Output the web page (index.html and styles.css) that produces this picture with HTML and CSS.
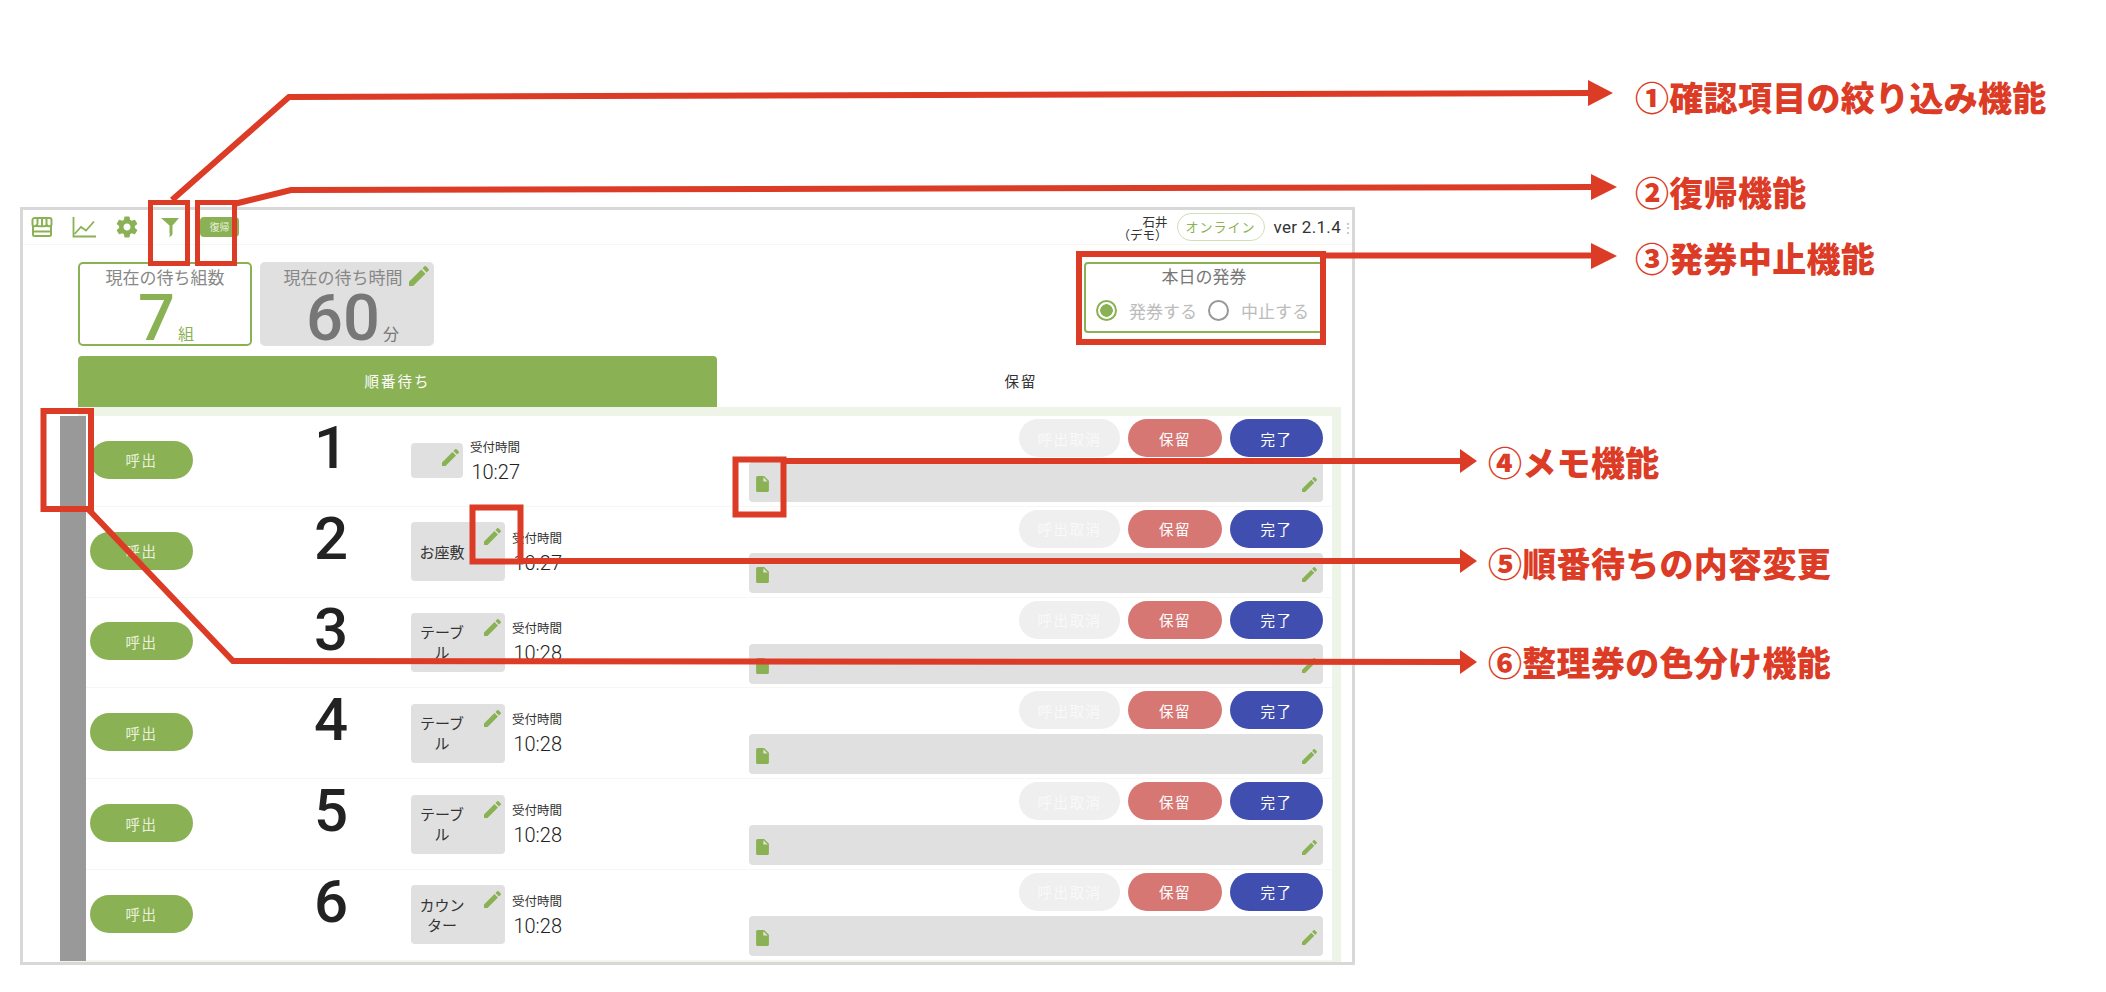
FILE: index.html
```html
<!DOCTYPE html>
<html lang="ja">
<head>
    <title>順番待ち 機能説明</title>
    <link rel="stylesheet" href="styles.css">
</head>
<body>
    <svg class="icon-defs" width="0" height="0">
        <symbol id="i-pencil" viewBox="3 3 18 18"><path d="M3 17.25V21h3.75L17.81 9.94l-3.75-3.75L3 17.25zM20.71 7.04c.39-.39.39-1.02 0-1.41l-2.34-2.34c-.39-.39-1.02-.39-1.41 0l-1.83 1.83 3.75 3.75 1.83-1.83z"/></symbol>
        <symbol id="i-doc" viewBox="4 2 16 20"><path fill-rule="evenodd" d="M6 2c-1.1 0-1.99.9-1.99 2L4 20c0 1.1.89 2 1.99 2H18c1.1 0 2-.9 2-2V8l-6-6H6zm7 7V3.5L18.5 9H13z"/></symbol>
    </svg>

    <div class="app">
        <header class="topbar">
            <div class="tools">
                <svg class="tool" width="22" height="20" viewBox="0 0 22 20" fill="none" stroke="#8ab255" stroke-width="2"><path d="M2 8v9.500a1.500 1.500 0 0 0 1.500 1.500h15a1.500 1.500 0 0 0 1.500-1.500V8"/><path d="M3.500 1h15a2 2 0 0 1 2 2v4c0 1.500-1.200 2.300-2.400 2.300s-2.500-.8-2.500-2.300c0 1.500-1.300 2.300-2.300 2.300H8.200C7.200 9.300 5.900 8.500 5.900 7c0 1.500-1.300 2.300-2.500 2.300S1.500 8.500 1.500 7V3a2 2 0 0 1 2-2z"/><path d="M6.500 1.500V7M11 1.500V9M15.500 1.500V7"/><path d="M2 14.500h18"/></svg>
                <svg class="tool" width="24" height="21" viewBox="0 0 24 21" fill="none" stroke="#8ab255" stroke-width="1.800"><path d="M1.500 0v19.500H24"/><path d="M2.500 17l6.500-7 5 3.500 8-9"/></svg>
                <svg class="tool tool-gear" width="22" height="22" viewBox="2 2 20 20" fill="#8ab255"><path fill-rule="evenodd" d="M19.140 12.940c.04-.3.06-.61.06-.94 0-.32-.02-.64-.07-.94l2.030-1.580c.18-.14.23-.41.12-.61l-1.920-3.320c-.12-.22-.37-.29-.59-.22l-2.390.96c-.5-.38-1.030-.7-1.620-.94l-.36-2.540c-.04-.24-.24-.41-.48-.41h-3.840c-.24 0-.43.17-.47.41l-.36 2.540c-.59.24-1.130.57-1.620.94l-2.390-.96c-.22-.08-.47 0-.59.22L2.740 8.870c-.12.21-.08.47.12.61l2.030 1.580c-.05.3-.09.63-.09.94s.02.64.07.94l-2.030 1.580c-.18.14-.23.41-.12.61l1.920 3.320c.12.22.37.29.59.22l2.390-.96c.5.38 1.030.7 1.620.94l.36 2.540c.05.24.24.41.48.41h3.840c.24 0 .44-.17.47-.41l.36-2.540c.59-.24 1.130-.56 1.620-.94l2.390.96c.22.08.47 0 .59-.22l1.920-3.320c.12-.22.07-.47-.12-.61l-2.010-1.580zM12 15.200c-1.760 0-3.200-1.440-3.200-3.200s1.440-3.200 3.200-3.200 3.200 1.440 3.200 3.200-1.440 3.200-3.200 3.200z"/></svg>
                <svg class="tool tool-filter" width="18" height="19" viewBox="0 0 18 19" fill="#8ab255"><path d="M0 0h18L11.500 7.500v8c0 2-1.500 3-3.500 3.500 1-1.500 1-3 .5-4.500V7.500z"/></svg>
                <button class="restore">復帰</button>
            </div>
            <div class="status">
                <div class="user">石井<br>（デモ）</div>
                <div class="online">オンライン</div>
                <div class="version">ver 2.1.4</div>
                <div class="more">⋮</div>
            </div>
        </header>

        <section class="summary">
            <div class="stat stat-count">
                <div class="stat-title">現在の待ち組数</div>
                <div class="stat-value">7<span class="stat-unit">組</span></div>
            </div>
            <div class="stat stat-time">
                <div class="stat-title">現在の待ち時間<svg class="pencil-big"><use href="#i-pencil"/></svg></div>
                <div class="stat-value">60<span class="stat-unit">分</span></div>
            </div>
            <div class="issue">
                <div class="issue-title">本日の発券</div>
                <div class="issue-options">
                    <span class="radio radio-on"></span><span class="radio-label">発券する</span>
                    <span class="radio"></span><span class="radio-label">中止する</span>
                </div>
            </div>
        </section>

        <nav class="tabs">
            <div class="tab tab-active">順番待ち</div>
            <div class="tab tab-hold">保留</div>
        </nav>

        <div class="board">
            <div class="board-band"></div>
            <div class="list">
                <div class="row">
                    <div class="color-bar"></div>
                    <button class="pill call">呼出</button>
                    <div class="number">1</div>
                    <div class="type type-empty"><svg class="pencil"><use href="#i-pencil"/></svg></div>
                    <div class="received"><div class="received-label">受付時間</div><div class="received-time">10:27</div></div>
                    <div class="actions">
                        <div class="buttons">
                            <button class="pill cancel">呼出取消</button>
                            <button class="pill hold">保留</button>
                            <button class="pill done">完了</button>
                        </div>
                        <div class="memo"><svg class="doc"><use href="#i-doc"/></svg><svg class="pencil-small"><use href="#i-pencil"/></svg></div>
                    </div>
                </div>
                <div class="row">
                    <div class="color-bar"></div>
                    <button class="pill call">呼出</button>
                    <div class="number">2</div>
                    <div class="type"><span class="type-name">お座敷</span><svg class="pencil"><use href="#i-pencil"/></svg></div>
                    <div class="received"><div class="received-label">受付時間</div><div class="received-time">10:27</div></div>
                    <div class="actions">
                        <div class="buttons">
                            <button class="pill cancel">呼出取消</button>
                            <button class="pill hold">保留</button>
                            <button class="pill done">完了</button>
                        </div>
                        <div class="memo"><svg class="doc"><use href="#i-doc"/></svg><svg class="pencil-small"><use href="#i-pencil"/></svg></div>
                    </div>
                </div>
                <div class="row">
                    <div class="color-bar"></div>
                    <button class="pill call">呼出</button>
                    <div class="number">3</div>
                    <div class="type"><span class="type-name">テーブル</span><svg class="pencil"><use href="#i-pencil"/></svg></div>
                    <div class="received"><div class="received-label">受付時間</div><div class="received-time">10:28</div></div>
                    <div class="actions">
                        <div class="buttons">
                            <button class="pill cancel">呼出取消</button>
                            <button class="pill hold">保留</button>
                            <button class="pill done">完了</button>
                        </div>
                        <div class="memo"><svg class="doc"><use href="#i-doc"/></svg><svg class="pencil-small"><use href="#i-pencil"/></svg></div>
                    </div>
                </div>
                <div class="row">
                    <div class="color-bar"></div>
                    <button class="pill call">呼出</button>
                    <div class="number">4</div>
                    <div class="type"><span class="type-name">テーブル</span><svg class="pencil"><use href="#i-pencil"/></svg></div>
                    <div class="received"><div class="received-label">受付時間</div><div class="received-time">10:28</div></div>
                    <div class="actions">
                        <div class="buttons">
                            <button class="pill cancel">呼出取消</button>
                            <button class="pill hold">保留</button>
                            <button class="pill done">完了</button>
                        </div>
                        <div class="memo"><svg class="doc"><use href="#i-doc"/></svg><svg class="pencil-small"><use href="#i-pencil"/></svg></div>
                    </div>
                </div>
                <div class="row">
                    <div class="color-bar"></div>
                    <button class="pill call">呼出</button>
                    <div class="number">5</div>
                    <div class="type"><span class="type-name">テーブル</span><svg class="pencil"><use href="#i-pencil"/></svg></div>
                    <div class="received"><div class="received-label">受付時間</div><div class="received-time">10:28</div></div>
                    <div class="actions">
                        <div class="buttons">
                            <button class="pill cancel">呼出取消</button>
                            <button class="pill hold">保留</button>
                            <button class="pill done">完了</button>
                        </div>
                        <div class="memo"><svg class="doc"><use href="#i-doc"/></svg><svg class="pencil-small"><use href="#i-pencil"/></svg></div>
                    </div>
                </div>
                <div class="row">
                    <div class="color-bar"></div>
                    <button class="pill call">呼出</button>
                    <div class="number">6</div>
                    <div class="type"><span class="type-name">カウンター</span><svg class="pencil"><use href="#i-pencil"/></svg></div>
                    <div class="received"><div class="received-label">受付時間</div><div class="received-time">10:28</div></div>
                    <div class="actions">
                        <div class="buttons">
                            <button class="pill cancel">呼出取消</button>
                            <button class="pill hold">保留</button>
                            <button class="pill done">完了</button>
                        </div>
                        <div class="memo"><svg class="doc"><use href="#i-doc"/></svg><svg class="pencil-small"><use href="#i-pencil"/></svg></div>
                    </div>
                </div>
            </div>
        </div>
    </div>

    <!-- red callouts drawn over the screenshot -->
    <svg class="callouts" width="2106" height="992" fill="none" stroke="#dc3b26" stroke-width="6">
        <rect x="150.500" y="202.500" width="37" height="61" stroke-width="5"/>
        <rect x="197.500" y="202.500" width="37" height="61" stroke-width="5"/>
        <rect x="1079" y="254" width="244" height="88"/>
        <rect x="43.500" y="411" width="47.500" height="98"/>
        <rect x="472.500" y="507.500" width="48" height="54"/>
        <rect x="735.500" y="459.500" width="48" height="55"/>
        <path d="M172 200L289 97L1590 93"/>
        <path d="M234 204L291 190L1592 187"/>
        <path d="M1323 255.500H1592"/>
        <path d="M783 461H1462"/>
        <path d="M520 561H1462"/>
        <path d="M88 509L233 661L1462 662"/>
        <g fill="#dc3b26" stroke="none">
            <polygon points="1588,80 1613,93 1588,106"/>
            <polygon points="1591,174 1617,187 1591,200"/>
            <polygon points="1591,243 1617,256 1591,269"/>
            <polygon points="1460,449 1477,461 1460,473"/>
            <polygon points="1460,549 1477,561 1460,573"/>
            <polygon points="1460,650 1477,662 1460,674"/>
        </g>
    </svg>
    <div class="note note-1">①確認項目の絞り込み機能</div>
    <div class="note note-2">②復帰機能</div>
    <div class="note note-3">③発券中止機能</div>
    <div class="note note-4">④メモ機能</div>
    <div class="note note-5">⑤順番待ちの内容変更</div>
    <div class="note note-6">⑥整理券の色分け機能</div>
</body>
</html>
```

FILE: styles.css
```css
* {
    box-sizing: border-box;
}
body {
    margin: 0;
    height: 992px;
    overflow: hidden;
    position: relative;
    background-color: #fff;
    font-family: "Noto Sans CJK JP", "Noto Sans", sans-serif;
    color: #333;
}
button {
    font-family: inherit;
    border: none;
    padding: 0;
}
.icon-defs {
    position: absolute;
}

.app {
    width: 1335px;
    height: 758px;
    margin: 207px 0 0 20px;
    border: 3px solid #d8d8d8;
    overflow: hidden;
}

/* top bar */
.topbar {
    height: 35px;
    display: flex;
    justify-content: space-between;
    border-bottom: 1px solid #f6f8f0;
}
.tools {
    display: flex;
    align-items: center;
    padding-left: 8px;
}
.tool {
    margin-right: 19px;
}
.tool-gear {
    margin: 0 23px 0 1px;
}
.tool-filter {
    margin-right: 21px;
}
.restore {
    width: 39px;
    height: 20px;
    border-radius: 4px;
    background-color: #8ab255;
    color: #e8f0da;
    font-size: 10px;
    line-height: 20px;
}
.status {
    display: flex;
    align-items: center;
}
.user {
    font-size: 12.500px;
    line-height: 13px;
    text-align: right;
    margin-right: 9px;
    margin-top: 2px;
}
.online {
    width: 88px;
    height: 28px;
    border: 1.5px solid #cfe0b6;
    border-radius: 14px;
    color: #8ab255;
    font-size: 13px;
    letter-spacing: 1px;
    line-height: 25px;
    text-align: center;
    margin-right: 9px;
}
.version {
    font-family: Roboto, sans-serif;
    font-size: 17px;
    letter-spacing: 0.3px;
    color: #333;
}
.more {
    font-size: 14px;
    color: #bbb;
    width: 11px;
    text-align: right;
}

/* summary cards */
.summary {
    display: flex;
    align-items: flex-start;
    padding: 17px 28px 0 55px;
}
.stat {
    width: 174px;
    height: 84px;
    border-radius: 5px;
    text-align: center;
    margin-right: 8px;
}
.stat-count {
    border: 2px solid #8ab255;
    color: #8ab255;
}
.stat-time {
    background-color: #e0e0e0;
    color: #777;
    padding: 2px 0 0 9px;
}
.stat-title {
    font-size: 17px;
    line-height: 24px;
    color: #888;
    margin-top: 1px;
    white-space: nowrap;
}
.stat-time .stat-title {
    padding-left: 9px;
}
.stat-value {
    font-family: Roboto, sans-serif;
    font-weight: 500;
    font-size: 65px;
    line-height: 52px;
    padding-left: 2px;
    margin-top: 3px;
}
.stat-unit {
    font-family: "Noto Sans CJK JP", sans-serif;
    font-weight: 400;
    font-size: 16px;
    margin-left: 3px;
}
.pencil-big {
    width: 20px;
    height: 20px;
    fill: #8ab255;
    margin-left: 6px;
    vertical-align: -2px;
}
.issue {
    width: 240px;
    height: 71px;
    margin-left: auto;
    border: 2px solid #8ab255;
    border-radius: 4px;
    text-align: center;
}
.issue-title {
    font-size: 17px;
    line-height: 24px;
    color: #777;
}
.issue-options {
    display: flex;
    align-items: center;
    padding: 10px 0 0 10px;
}
.radio {
    width: 21px;
    height: 21px;
    border: 2px solid #999;
    border-radius: 50%;
}
.radio-on {
    border-color: #8ab255;
    background: radial-gradient(circle, #8ab255 0 6px, #fff 6.5px);
}
.radio-label {
    font-size: 17px;
    color: #bbb;
    margin: 0 11px 0 12px;
}

/* tabs */
.tabs {
    display: flex;
    margin: 10px 11px 0 55px;
    height: 51px;
}
.tab {
    font-size: 14.500px;
    letter-spacing: 2px;
    line-height: 50px;
    text-align: center;
}
.tab-active {
    width: 639px;
    background-color: #8ab255;
    color: #fff;
    border-radius: 4px 4px 0 0;
}
.tab-hold {
    flex: 1;
    padding-right: 16px;
}

/* waiting list */
.board {
    margin: 0 11px 0 37px;
}
.board-band {
    height: 9px;
    margin-left: 18px;
    background-color: #eff4e8;
}
.list {
    border-right: 9px solid #eff4e8;
    border-bottom: 3px solid #eff4e8;
}
.row {
    height: 90.800px;
    display: flex;
    align-items: center;
    border-bottom: 1px solid #f5f7f0;
}
.color-bar {
    width: 26px;
    height: calc(100% + 1px);
    margin-bottom: -1px;
    background-color: #999;
}
.pill {
    height: 38px;
    border-radius: 19px;
    color: #fff;
    font-size: 14.500px;
    letter-spacing: 1.500px;
}
.call {
    width: 103px;
    margin: -2px 0 0 4px;
    background-color: #8ab255;
    color: #e9f1dc;
}
.number {
    width: 218px;
    padding-left: 58px;
    align-self: flex-start;
    text-align: center;
    font-family: Roboto, sans-serif;
    font-weight: 500;
    font-size: 60px;
    line-height: 64px;
    color: #222;
}
.type {
    width: 94px;
    height: 59px;
    display: flex;
    align-items: flex-start;
    padding: 6px 4px 0 6px;
    background-color: #e0e0e0;
    border-radius: 4px;
}
.type-empty {
    width: 52px;
    height: 35px;
    justify-content: flex-end;
}
.type-name {
    width: 50px;
    align-self: center;
    margin-top: -6px;
    font-size: 15px;
    line-height: 20px;
    text-align: center;
}
.pencil {
    width: 17px;
    height: 17px;
    margin-left: auto;
    fill: #8ab255;
}
.received {
    width: 53px;
    margin-left: 4px;
    text-align: right;
}
.received-label {
    font-size: 12.500px;
    line-height: 18px;
    white-space: nowrap;
}
.received-time {
    font-family: Roboto, sans-serif;
    font-weight: 300;
    font-size: 20px;
    line-height: 24px;
    margin-top: 4px;
    color: #222;
}
.actions {
    width: 574px;
    margin-left: auto;
    margin-right: 9px;
    align-self: flex-start;
    padding-top: 3px;
}
.buttons {
    display: flex;
    justify-content: flex-end;
    gap: 8px;
}
.cancel {
    width: 101px;
    background-color: #efefef;
    color: #f9f9f9;
}
.hold {
    width: 94px;
    background-color: #d67773;
}
.done {
    width: 93px;
    background-color: #404eaf;
}
.memo {
    height: 40px;
    margin-top: 5px;
    display: flex;
    align-items: center;
    justify-content: space-between;
    padding: 4px 6px 0 7px;
    background-color: #e0e0e0;
    border-radius: 4px;
}
.doc {
    width: 13px;
    height: 16px;
    fill: #8ab255;
}
.pencil-small {
    width: 15px;
    height: 15px;
    fill: #8ab255;
}

/* callouts */
.callouts {
    position: absolute;
    left: 0;
    top: 0;
}
.note {
    position: absolute;
    font-size: 34px;
    font-weight: 900;
    letter-spacing: 0.3px;
    line-height: 40px;
    color: #dc3b26;
    white-space: nowrap;
}
.note-1 { left: 1635px; top: 77px; }
.note-2 { left: 1635px; top: 172px; }
.note-3 { left: 1635px; top: 238px; }
.note-4 { left: 1488px; top: 442px; }
.note-5 { left: 1488px; top: 543px; }
.note-6 { left: 1488px; top: 642px; }
```
